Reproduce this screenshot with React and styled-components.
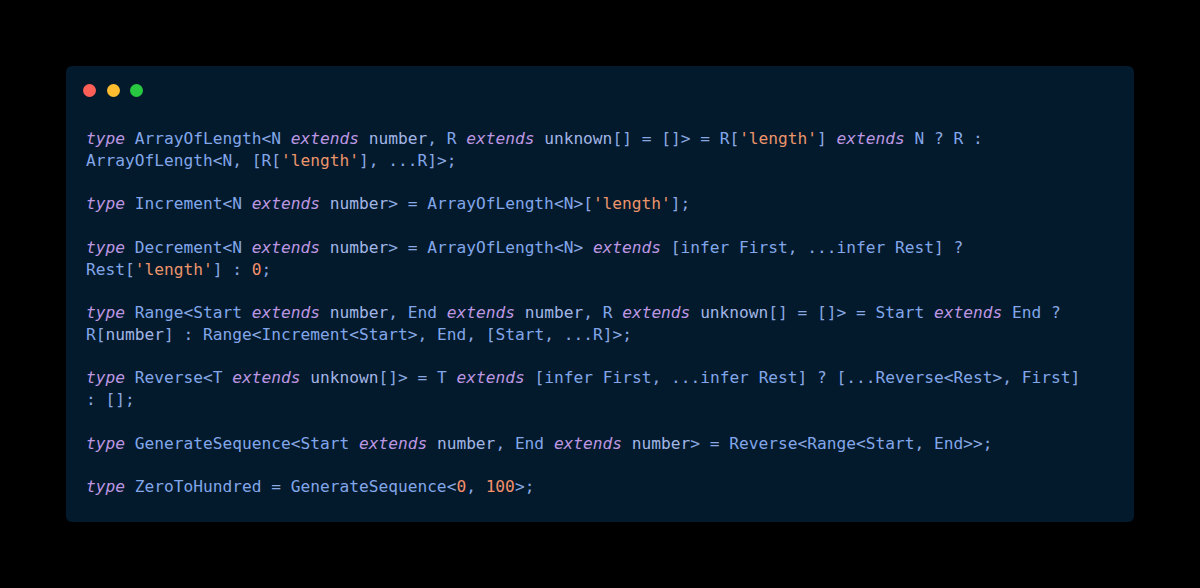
import React from "react";
import styled, { createGlobalStyle, css } from "styled-components";

const GlobalStyle = createGlobalStyle`
  html, body {
    margin: 0;
    padding: 0;
    background: #000000;
  }
  body {
    width: 1200px;
    height: 588px;
    overflow: hidden;
  }
`;

const Page = styled.div`
  box-sizing: border-box;
  width: 1200px;
  height: 588px;
  padding: 66px 66px 0 66px;
  background: #000000;
`;

const Window = styled.div`
  box-sizing: border-box;
  width: 1068px;
  height: 456px;
  background: #021a2b;
  border-radius: 6px;
  padding: 17px 20px 0 20px;
  display: flex;
  flex-direction: column;
`;

const Lights = styled.div`
  display: flex;
  gap: 10.5px;
  margin-left: -3px;
  height: 14px;
  align-items: center;
`;

const Light = styled.span`
  width: 13px;
  height: 13px;
  border-radius: 50%;
  background: ${(p) => p.$color};
`;

const Code = styled.pre`
  margin: 31px 0 0 0;
  font-family: "DejaVu Sans Mono", "Liberation Mono", monospace;
  font-size: 16.2px;
  line-height: 21.75px;
  color: #82a6ea;
  white-space: pre;
`;

const Line = styled.div`
  height: 21.75px;
`;

const kinds = {
  kw: css`
    color: #bd96e2;
    font-style: italic;
  `,
  prim: css`
    color: #a3b5e6;
  `,
  str: css`
    color: #ec946c;
  `,
  num: css`
    color: #f58f6a;
  `,
  id: css`
    color: #82a6ea;
  `,
  punct: css`
    color: #8aa8e2;
  `,
};

const Token = styled.span`
  ${(p) => kinds[p.$kind] || ""}
`;

const lines = [
  "type ArrayOfLength<N extends number, R extends unknown[] = []> = R['length'] extends N ? R :",
  "ArrayOfLength<N, [R['length'], ...R]>;",
  "",
  "type Increment<N extends number> = ArrayOfLength<N>['length'];",
  "",
  "type Decrement<N extends number> = ArrayOfLength<N> extends [infer First, ...infer Rest] ?",
  "Rest['length'] : 0;",
  "",
  "type Range<Start extends number, End extends number, R extends unknown[] = []> = Start extends End ?",
  "R[number] : Range<Increment<Start>, End, [Start, ...R]>;",
  "",
  "type Reverse<T extends unknown[]> = T extends [infer First, ...infer Rest] ? [...Reverse<Rest>, First]",
  ": [];",
  "",
  "type GenerateSequence<Start extends number, End extends number> = Reverse<Range<Start, End>>;",
  "",
  "type ZeroToHundred = GenerateSequence<0, 100>;",
];

const KEYWORDS = new Set(["type", "extends"]);
const PRIMS = new Set(["number", "unknown"]);

function tokenize(line) {
  const re = /('[^']*')|(\d+)|([A-Za-z_]\w*)|(\s+)|(.)/g;
  const out = [];
  let m;
  while ((m = re.exec(line)) !== null) {
    const text = m[0];
    let kind = "punct";
    if (m[1]) kind = "str";
    else if (m[2]) kind = "num";
    else if (m[3]) {
      if (KEYWORDS.has(text)) kind = "kw";
      else if (PRIMS.has(text)) kind = "prim";
      else kind = "id";
    } else if (m[4]) kind = "space";
    out.push({ text, kind });
  }
  return out;
}

export default function App() {
  return (
    <>
      <GlobalStyle />
      <Page>
        <Window>
          <Lights>
            <Light $color="#ff5f57" />
            <Light $color="#febc2e" />
            <Light $color="#28c840" />
          </Lights>
          <Code>
            {lines.map((line, i) => (
              <Line key={i}>
                {tokenize(line).map((t, j) => (
                  <Token key={j} $kind={t.kind}>
                    {t.text}
                  </Token>
                ))}
              </Line>
            ))}
          </Code>
        </Window>
      </Page>
    </>
  );
}
